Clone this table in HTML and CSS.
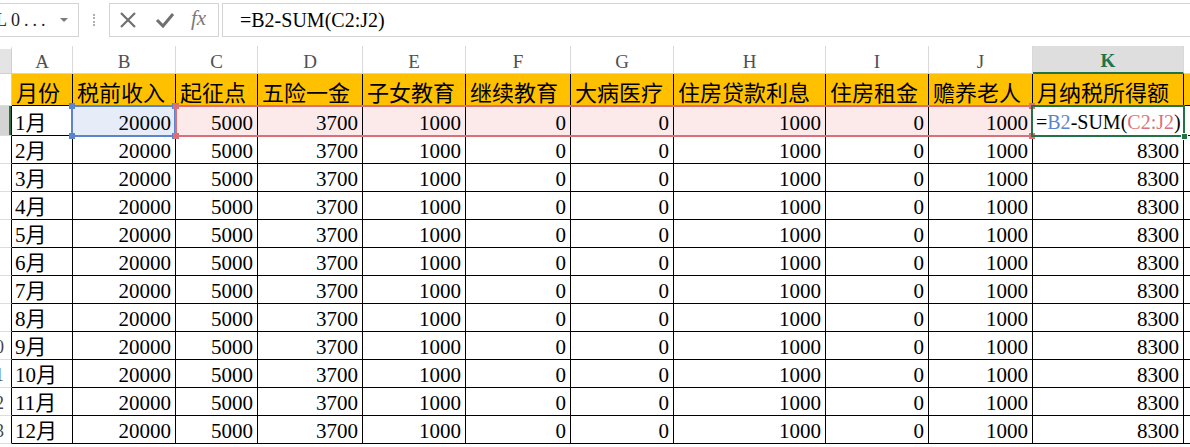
FILE: index.html
```html
<!DOCTYPE html>
<html lang="zh">
<head>
<meta charset="utf-8">
<title>Sheet</title>
<link rel="stylesheet" href="styles.css">
</head>
<body>
<div class="fbar">
  <div class="namebox"><span class="nbtext">L0...</span><span class="nbarrow"></span></div>
  <div class="sep"></div>
  <div class="btns">
    <svg class="ico" width="20" height="18" viewBox="0 0 20 18"><path d="M3 2 L17 16 M17 2 L3 16" stroke="#707070" stroke-width="2.2" fill="none"/></svg>
    <svg class="ico" width="20" height="18" viewBox="0 0 20 18"><path d="M2 9 L8 15 L18 3" stroke="#707070" stroke-width="3" fill="none"/></svg>
    <span class="fx">fx</span>
  </div>
  <div class="finput">=B2-SUM(C2:J2)</div>
</div>
<div class="sheet">
  <div class="corner"></div>
  <div class="ch">A</div><div class="ch">B</div><div class="ch">C</div><div class="ch">D</div><div class="ch">E</div><div class="ch">F</div><div class="ch">G</div><div class="ch">H</div><div class="ch">I</div><div class="ch">J</div><div class="ch act">K</div><div class="ch"></div>

  <div class="rh rhy"><span>1</span></div>
  <div class="y">月份</div><div class="y">税前收入</div><div class="y">起征点</div><div class="y">五险一金</div><div class="y">子女教育</div><div class="y">继续教育</div><div class="y">大病医疗</div><div class="y">住房贷款利息</div><div class="y">住房租金</div><div class="y">赡养老人</div><div class="y">月纳税所得额</div><div class="y e"></div>

  <div class="rh sel"><span>2</span></div>
  <div class="d t">1月</div><div class="d selb">20000</div><div class="d selp">5000</div><div class="d selp">3700</div><div class="d selp">1000</div><div class="d selp">0</div><div class="d selp">0</div><div class="d selp">1000</div><div class="d selp">0</div><div class="d selp">1000</div><div class="d t k2">=<span class="fb">B2</span>-SUM(<span class="fp">C2:J2</span>)</div><div class="d e"></div>

  <div class="rh"><span>3</span></div>
  <div class="d t">2月</div><div class="d">20000</div><div class="d">5000</div><div class="d">3700</div><div class="d">1000</div><div class="d">0</div><div class="d">0</div><div class="d">1000</div><div class="d">0</div><div class="d">1000</div><div class="d">8300</div><div class="d e"></div>

  <div class="rh"><span>4</span></div>
  <div class="d t">3月</div><div class="d">20000</div><div class="d">5000</div><div class="d">3700</div><div class="d">1000</div><div class="d">0</div><div class="d">0</div><div class="d">1000</div><div class="d">0</div><div class="d">1000</div><div class="d">8300</div><div class="d e"></div>

  <div class="rh"><span>5</span></div>
  <div class="d t">4月</div><div class="d">20000</div><div class="d">5000</div><div class="d">3700</div><div class="d">1000</div><div class="d">0</div><div class="d">0</div><div class="d">1000</div><div class="d">0</div><div class="d">1000</div><div class="d">8300</div><div class="d e"></div>

  <div class="rh"><span>6</span></div>
  <div class="d t">5月</div><div class="d">20000</div><div class="d">5000</div><div class="d">3700</div><div class="d">1000</div><div class="d">0</div><div class="d">0</div><div class="d">1000</div><div class="d">0</div><div class="d">1000</div><div class="d">8300</div><div class="d e"></div>

  <div class="rh"><span>7</span></div>
  <div class="d t">6月</div><div class="d">20000</div><div class="d">5000</div><div class="d">3700</div><div class="d">1000</div><div class="d">0</div><div class="d">0</div><div class="d">1000</div><div class="d">0</div><div class="d">1000</div><div class="d">8300</div><div class="d e"></div>

  <div class="rh"><span>8</span></div>
  <div class="d t">7月</div><div class="d">20000</div><div class="d">5000</div><div class="d">3700</div><div class="d">1000</div><div class="d">0</div><div class="d">0</div><div class="d">1000</div><div class="d">0</div><div class="d">1000</div><div class="d">8300</div><div class="d e"></div>

  <div class="rh"><span>9</span></div>
  <div class="d t">8月</div><div class="d">20000</div><div class="d">5000</div><div class="d">3700</div><div class="d">1000</div><div class="d">0</div><div class="d">0</div><div class="d">1000</div><div class="d">0</div><div class="d">1000</div><div class="d">8300</div><div class="d e"></div>

  <div class="rh"><span>10</span></div>
  <div class="d t">9月</div><div class="d">20000</div><div class="d">5000</div><div class="d">3700</div><div class="d">1000</div><div class="d">0</div><div class="d">0</div><div class="d">1000</div><div class="d">0</div><div class="d">1000</div><div class="d">8300</div><div class="d e"></div>

  <div class="rh"><span>11</span></div>
  <div class="d t">10月</div><div class="d">20000</div><div class="d">5000</div><div class="d">3700</div><div class="d">1000</div><div class="d">0</div><div class="d">0</div><div class="d">1000</div><div class="d">0</div><div class="d">1000</div><div class="d">8300</div><div class="d e"></div>

  <div class="rh"><span>12</span></div>
  <div class="d t">11月</div><div class="d">20000</div><div class="d">5000</div><div class="d">3700</div><div class="d">1000</div><div class="d">0</div><div class="d">0</div><div class="d">1000</div><div class="d">0</div><div class="d">1000</div><div class="d">8300</div><div class="d e"></div>

  <div class="rh"><span>13</span></div>
  <div class="d t">12月</div><div class="d">20000</div><div class="d">5000</div><div class="d">3700</div><div class="d">1000</div><div class="d">0</div><div class="d">0</div><div class="d">1000</div><div class="d">0</div><div class="d">1000</div><div class="d">8300</div><div class="d e"></div>

  <div class="rng rb"><i class="h tl"></i><i class="h tr"></i><i class="h bl"></i><i class="h br"></i></div>
  <div class="rng rp"><i class="h tl"></i><i class="h tr"></i><i class="h bl"></i><i class="h br"></i></div>
  <div class="rng rg"><i class="h fill"></i></div>
</div>
</body>
</html>
```

FILE: styles.css
```css
* { box-sizing: border-box; margin: 0; padding: 0; }
body {
  margin: 0;
  width: 1190px;
  height: 447px;
  overflow: hidden;
  background: #fff;
  font-family: "Liberation Serif", "Noto Sans CJK SC", serif;
  color: #000;
}

/* formula bar */
.fbar {
  height: 46px;
  display: flex;
  align-items: flex-start;
  padding-top: 3px;
}
.namebox {
  width: 79px;
  height: 34px;
  border: 1px solid #d4d4d4;
  border-left: none;
  display: flex;
  align-items: center;
  justify-content: space-between;
  padding-right: 10px;
  overflow: hidden;
}
.nbtext {
  font-size: 18px;
  margin-left: -4px;
  color: #222;
  letter-spacing: 4px;
  white-space: nowrap;
}
.nbarrow {
  width: 0;
  height: 0;
  border-left: 4px solid transparent;
  border-right: 4px solid transparent;
  border-top: 4px solid #7a7a7a;
}
.sep {
  width: 2px;
  height: 12px;
  margin: 11px 14px 0 14px;
  border-left: 2px dotted #b0b0b0;
}
.btns {
  width: 110px;
  height: 34px;
  border: 1px solid #d4d4d4;
  display: flex;
  align-items: center;
  padding-left: 8px;
  gap: 17px;
}
.ico { flex: none; }
.fx {
  font-family: "Liberation Serif", serif;
  font-style: italic;
  font-size: 21px;
  color: #7a7a7a;
  margin-left: -1px;
  margin-top: -3px;
}
.finput {
  flex: 1;
  height: 34px;
  margin-left: 3px;
  border: 1px solid #d4d4d4;
  border-right: none;
  padding-left: 17px;
  font-size: 20px;
  line-height: 32px;
  white-space: nowrap;
}

/* sheet grid */
.sheet {
  position: relative;
  display: grid;
  grid-template-columns: 12px 61px 103px 82px 105px 103px 105px 103px 152px 103px 104px 151px 40px;
  grid-template-rows: 28px 32px 30px repeat(11, 28px);
}
.corner {
  background: #e4e4e4;
  border-right: 1px solid #cfcfcf;
  border-bottom: 1px solid #cfcfcf;
  border-top: 3px solid #fff;
}
.ch {
  border-right: 1px solid #d9d9d9;
  border-bottom: 1px solid #d4d4d4;
  display: flex;
  align-items: center;
  justify-content: center;
  font-size: 19px;
  color: #505050;
  padding-top: 4px;
}
.ch.act {
  background: #dedede;
  color: #217346;
  font-weight: bold;
  border-bottom: 2px solid #217346;
}
.rh {
  border-right: 1px solid #000;
  border-bottom: 1px solid #dcdcdc;
  overflow: hidden;
  display: flex;
  align-items: flex-end;
}
.rh span {
  flex: none;
  width: 30px;
  margin-left: -20px;
  text-align: center;
  font-size: 18px;
  line-height: 1.3;
  color: #444;
}
.rh.rhy { border-right-color: #cfcfcf; }
.rh.sel {
  background: #d4d4d4;
  box-shadow: inset -2px 0 0 #217346;
}
.y {
  background: #ffc000;
  border-right: 1px solid #000;
  border-bottom: 1px solid #000;
  font-family: "Noto Sans CJK SC", sans-serif;
  font-size: 22px;
  line-height: 1;
  display: flex;
  align-items: center;
  padding: 2px 0 0 4px;
  white-space: nowrap;
  overflow: hidden;
}
.d {
  border-right: 1px solid #000;
  border-bottom: 1px solid #000;
  font-size: 21px;
  line-height: 1.15;
  display: flex;
  align-items: flex-end;
  justify-content: flex-end;
  padding-right: 4px;
  white-space: nowrap;
}
.d.t {
  justify-content: flex-start;
  padding-left: 3px;
  padding-right: 0;
}
.e { border-right: none; }
.selb { background: #e6ecf8; }
.selp { background: #fce9ea; }
.k2 {
  font-size: 20px;
  overflow: visible;
  padding-left: 3px;
  padding-bottom: 1px;
}
.fb { color: #5b84cf; }
.fp { color: #d9737b; }

/* range highlights drawn over the grid */
.rng {
  position: absolute;
  top: 59px;
  height: 32px;
  border: 2px solid currentColor;
}
.rb { left: 71px; width: 105px; color: #5b84cf; }
.rp { left: 175px; width: 858px; color: #db6f78; }
.rg { left: 1031px; width: 154px; color: #217346; }
.h {
  position: absolute;
  width: 6px;
  height: 6px;
  background: currentColor;
}
.tl { left: -4px; top: -4px; }
.tr { right: -4px; top: -4px; }
.bl { left: -4px; bottom: -4px; }
.br { right: -4px; bottom: -4px; }
.fill {
  right: -5px;
  bottom: -5px;
  width: 7px;
  height: 7px;
  border: 1px solid #fff;
}
```
